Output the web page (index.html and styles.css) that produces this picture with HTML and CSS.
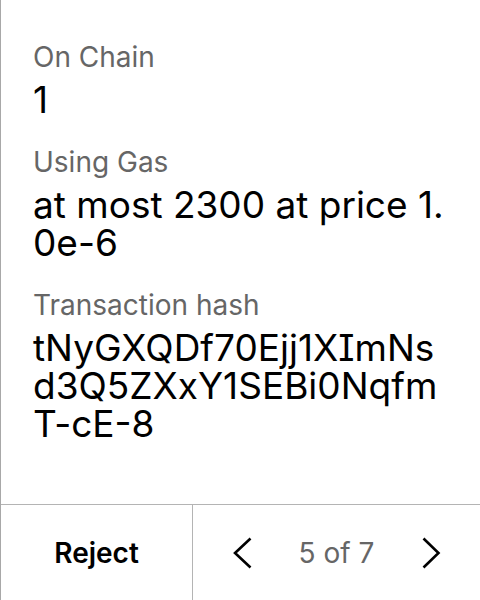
FILE: index.html
```html
<!DOCTYPE html>
<html>
<head>
<meta charset="utf-8">
<link rel="stylesheet" href="styles.css">
</head>
<body>
<div class="screen">
  <div class="details">
    <div class="field">
      <div class="label">On Chain</div>
      <div class="value">1</div>
    </div>
    <div class="field">
      <div class="label">Using Gas</div>
      <div class="value">at most 2300 at price 1.0e-6</div>
    </div>
    <div class="field">
      <div class="label">Transaction hash</div>
      <div class="value">tNyGXQDf70Ejj1XImNsd3Q5ZXxY1SEBi0NqfmT-cE-8</div>
    </div>
  </div>
  <div class="footer">
    <div class="reject">Reject</div>
    <div class="pager">
      <svg class="chev" width="20" height="32" viewBox="0 0 20 32"><path d="M18.5 1.5 L3 16 L18.5 30.5" fill="none" stroke="#000" stroke-width="2.6"/></svg>
      <span class="count">5 of 7</span>
      <svg class="chev" width="20" height="32" viewBox="0 0 20 32"><path d="M2.5 1.5 L17.5 16 L2.5 30.5" fill="none" stroke="#000" stroke-width="2.6"/></svg>
    </div>
  </div>
</div>
</body>
</html>
```
FILE: styles.css
```css
html, body {
  margin: 0;
  padding: 0;
  background: #fff;
}
body {
  font-family: Inter, "Noto Sans", sans-serif;
  font-feature-settings: "cv08" 1;
  color: #000;
}
.screen {
  width: 479px;
  height: 600px;
  border-left: 1px solid #a8a8a8;
  display: flex;
  flex-direction: column;
}
.details {
  flex: 1;
  padding: 40px 36px 0 32px;
  display: flex;
  flex-direction: column;
  gap: 26px;
}
.label {
  font-size: 28px;
  line-height: 34px;
  color: #666;
}
.value {
  font-size: 37px;
  line-height: 38px;
  word-break: break-all;
  margin-top: 7px;
}
.footer {
  height: 95px;
  border-top: 1px solid #b4b4b4;
  display: flex;
}
.reject {
  width: 191px;
  display: flex;
  align-items: center;
  justify-content: center;
  font-size: 28px;
  font-weight: 600;
}
.pager {
  flex: 1;
  border-left: 1px solid #b4b4b4;
  display: flex;
  align-items: center;
  justify-content: center;
  gap: 47px;
}
.count {
  font-size: 28px;
  color: #666;
}
.chev {
  display: block;
}
```
